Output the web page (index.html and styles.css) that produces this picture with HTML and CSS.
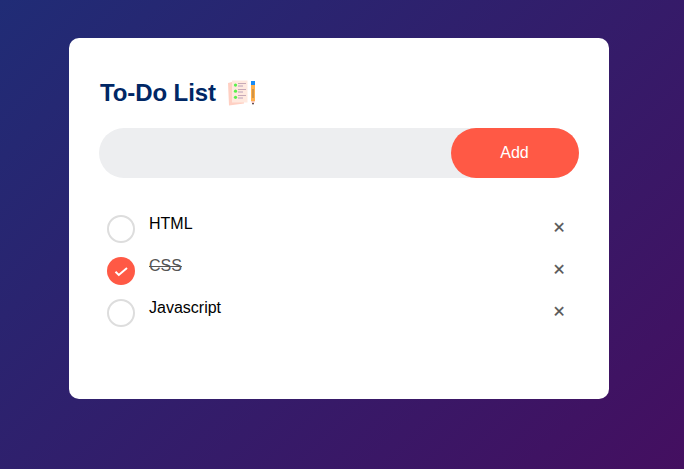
FILE: index.html
```html
<!DOCTYPE html>
<html lang="en">
<head>
<meta charset="utf-8">
<title>To-Do List</title>
<link rel="stylesheet" href="styles.css">
</head>
<body>
<main class="container">
  <section class="todo-app">
    <h2>To-Do List
      <svg class="icon" viewBox="0 0 30 30" aria-hidden="true">
        <path fill="#ffd0c3" d="M1 5 5 4v20h12v1.500L2 27.500z"/>
        <path fill="#ffe9df" d="M5 2.500h15.500v22H5z"/>
        <g fill="#5af04b"><circle cx="8.500" cy="7.100" r="1.600"/><circle cx="8.500" cy="13.200" r="1.600"/><circle cx="8.500" cy="19.300" r="1.600"/></g>
        <path stroke="#c7a9b7" d="M11 5.500h8M11 11.500h8M11 17.500h8"/>
        <path stroke="#b8a0ba" d="M11 8h5M11 14h5M11 20h5"/>
        <path fill="#ffb04b" d="M24 7h4v16h-4z"/>
        <path fill="#168bf5" d="M24 3h4v4h-4z"/>
        <path stroke="#a57843" d="M26 11v9"/>
        <path fill="#f6c4b9" d="M24 23h4l-1.500 3h-1z"/>
        <path fill="#33242e" d="M25 25h2l-1 2z"/>
      </svg>
    </h2>
    <div class="row">
      <input type="text" aria-label="Task">
      <button type="button">Add</button>
    </div>
    <ul>
      <li><span class="mark"></span><span class="label">HTML</span><span class="remove">×</span></li>
      <li class="checked"><span class="mark"><svg viewBox="0 0 28 28"><path d="m8.500 14.800 3.300 3.200 8.200-7"/></svg></span><span class="label">CSS</span><span class="remove">×</span></li>
      <li><span class="mark"></span><span class="label">Javascript</span><span class="remove">×</span></li>
    </ul>
  </section>
</main>
</body>
</html>
```
FILE: styles.css
```css
* {
  margin: 0;
  padding: 0;
  box-sizing: border-box;
  font-family: "Liberation Sans", Arial, sans-serif;
}
.container {
  height: 469px;
  padding: 38px 75px 70px 69px;
  background: linear-gradient(135deg, #202c76, #440f60);
}
.todo-app {
  height: 361px;
  padding: 40px 30px;
  border-radius: 10px;
  background: #fff;
}
h2 {
  display: flex;
  align-items: center;
  gap: 11px;
  height: 30px;
  padding-left: 1px;
  color: #002765;
  font-size: 24px;
  line-height: 30px;
  letter-spacing: -0.1px;
}
.icon {
  width: 30px;
  height: 30px;
  fill: none;
}
.row {
  display: flex;
  height: 50px;
  margin-top: 20px;
  border-radius: 25px;
  background: #edeef0;
}
input {
  flex: 1;
  min-width: 0;
  border: 0;
  outline: 0;
  background: transparent;
}
button {
  width: 128px;
  padding-right: 1px;
  border: 0;
  border-radius: 40px;
  background: #ff5945;
  color: #fff;
  font-size: 16px;
}
ul {
  margin-top: 25px;
  list-style: none;
}
li {
  display: flex;
  height: 42px;
  padding: 12px 0 0 8px;
  font-size: 16px;
  line-height: 18px;
}
.mark {
  width: 28px;
  height: 28px;
  border: 2px solid #ddd;
  border-radius: 50%;
}
.label {
  flex: 1;
  margin-left: 14px;
}
.remove {
  width: 40px;
  height: 26px;
  color: #555;
  font-size: 20px;
  line-height: 25px;
  text-align: center;
  -webkit-text-stroke: 0.25px #555;
}
.checked .mark {
  border: 0;
  background: #ff5945;
}
.checked svg {
  display: block;
  fill: none;
  stroke: #fff;
  stroke-width: 2;
}
.checked .label {
  color: #555;
  text-decoration: line-through;
}
```
